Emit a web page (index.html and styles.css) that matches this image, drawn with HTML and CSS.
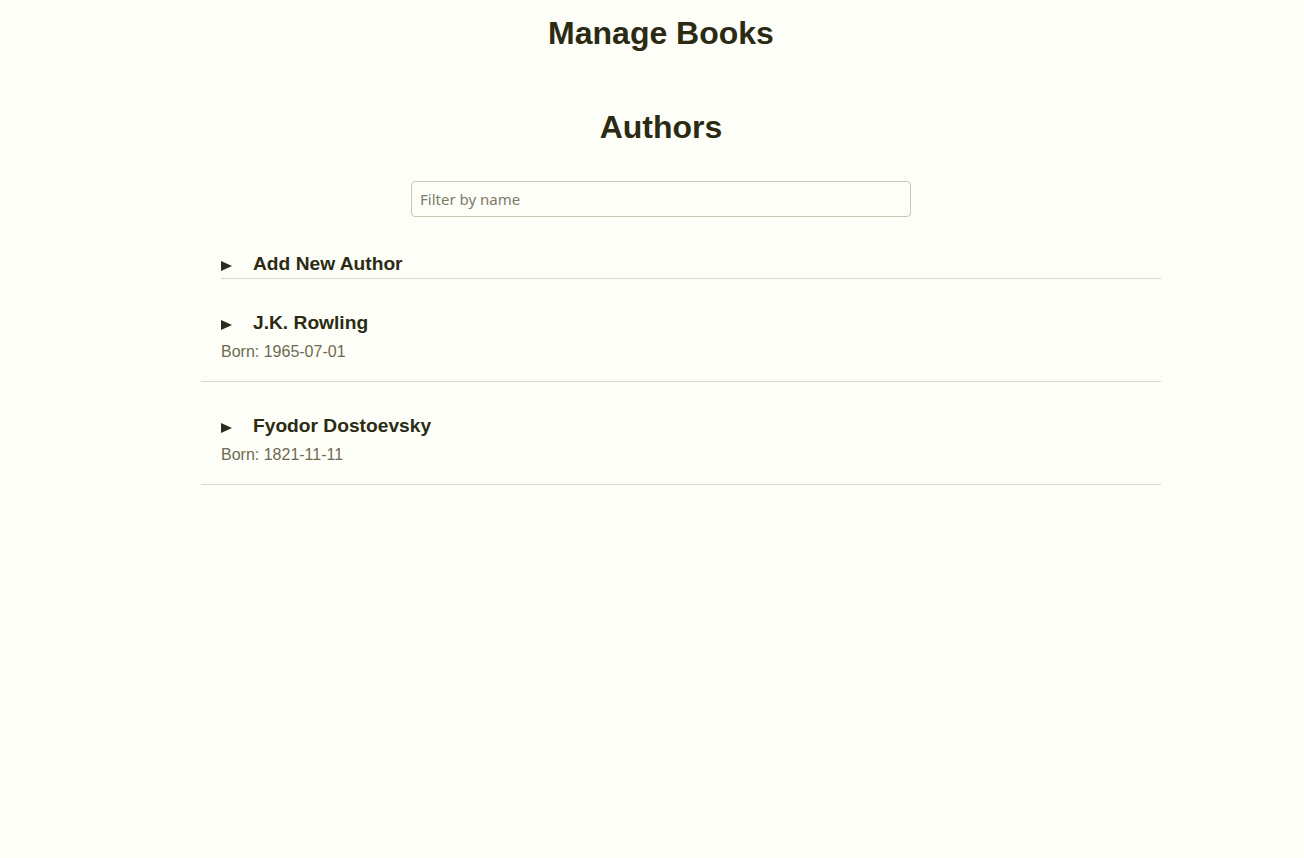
FILE: index.html
```html
<!DOCTYPE html>
<html lang="en">
<head>
<meta charset="utf-8">
<title>Manage Books</title>
<link rel="stylesheet" href="styles.css">
</head>
<body>
<main class="page">
  <h1 class="page-title">Manage Books</h1>
  <section class="authors">
    <h2 class="section-title">Authors</h2>
    <div class="filter-row">
      <input class="filter-input" type="text" placeholder="Filter by name">
    </div>
    <div class="add-author">
      <div class="summary add-summary"><span class="marker"></span><span class="summary-text">Add New Author</span></div>
    </div>
    <ul class="author-list">
      <li class="author-item">
        <div class="summary"><span class="marker"></span><span class="summary-text">J.K. Rowling</span></div>
        <p class="born">Born: 1965-07-01</p>
      </li>
      <li class="author-item">
        <div class="summary"><span class="marker"></span><span class="summary-text">Fyodor Dostoevsky</span></div>
        <p class="born">Born: 1821-11-11</p>
      </li>
    </ul>
  </section>
</main>
</body>
</html>
```
FILE: styles.css
```css
html, body {
  margin: 0;
  padding: 0;
}
body {
  background: #fefef8;
  font-family: "Liberation Sans", Arial, sans-serif;
  color: #2b2b14;
  padding-left: 18px;
}
.page {
  width: 1000px;
  margin: 0 auto;
}
.page-title {
  margin: 15px 0 0;
  font-size: 32px;
  line-height: 37px;
  font-weight: bold;
  text-align: center;
}
.section-title {
  margin: 57px 0 0;
  font-size: 32px;
  line-height: 37px;
  font-weight: bold;
  text-align: center;
}
.filter-row {
  display: flex;
  justify-content: center;
  margin-top: 35px;
}
.filter-input {
  box-sizing: border-box;
  width: 500px;
  height: 36px;
  border: 1px solid #c9c8b4;
  border-radius: 4px;
  background: transparent;
  padding: 0 8px;
  font-family: "Noto Sans", "Open Sans", sans-serif;
  font-size: 15px;
  color: #2b2b14;
  outline: none;
}
.filter-input::placeholder {
  color: #7c7b68;
}
.add-author {
  margin: 35px 0 0 60px;
}
.add-summary {
  padding-bottom: 3px;
  border-bottom: 1px solid #d8d7c8;
}
.summary {
  font-size: 19.2px;
  line-height: 23px;
  font-weight: bold;
  color: #2b2b14;
}
.marker {
  display: inline-block;
  width: 0;
  height: 0;
  border-left: 11px solid #2b2b1e;
  border-top: 5px solid transparent;
  border-bottom: 5px solid transparent;
  vertical-align: -1px;
  margin-right: 21px;
}
.author-list {
  list-style: none;
  margin: 0;
  padding: 0 0 0 40px;
}
.author-item {
  padding: 32px 20px 19px;
  border-bottom: 1px solid #d8d7c8;
}
.born {
  margin: 8px 0 0;
  font-size: 16px;
  line-height: 20px;
  color: #6e6a50;
}
```
